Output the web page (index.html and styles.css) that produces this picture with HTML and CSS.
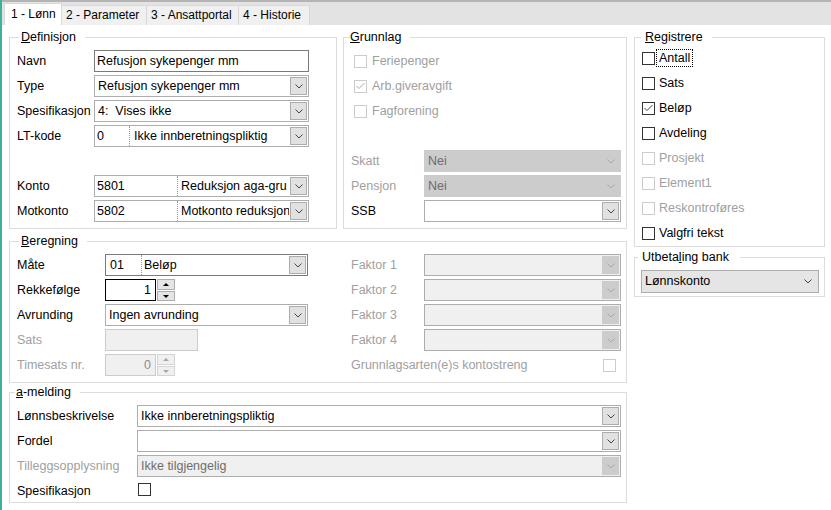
FILE: index.html
```html
<!DOCTYPE html>
<html lang="no">
<head>
    <meta charset="UTF-8">
    <title>Lønnsart</title>
    <link rel="stylesheet" href="styles.css">
</head>
<body>
<div class="window">
    <div class="tabbar">
        <div class="tab active t1">1 - Lønn</div>
        <div class="tab t2">2 - Parameter</div>
        <div class="tab t3">3 - Ansattportal</div>
        <div class="tab t4">4 - Historie</div>
    </div>

    <div class="page">
        <div class="left">
            <div class="top-row">
                <fieldset class="group def">
                    <legend><u>D</u>efinisjon</legend>
                    <div class="form def-form">
                        <label>Navn</label>
                        <div class="text dark">Refusjon sykepenger mm</div>

                        <label>Type</label>
                        <div class="combo">
                            <span class="val">Refusjon sykepenger mm</span>
                            <span class="btn"><svg width="8" height="5" viewBox="0 0 8 5"><polyline points="0.5,0.5 4,4 7.5,0.5"/></svg></span>
                        </div>

                        <label>Spesifikasjon</label>
                        <div class="combo">
                            <span class="val">4:&nbsp; Vises ikke</span>
                            <span class="btn"><svg width="8" height="5" viewBox="0 0 8 5"><polyline points="0.5,0.5 4,4 7.5,0.5"/></svg></span>
                        </div>

                        <label>LT-kode</label>
                        <div class="combo">
                            <span class="code lt">0</span>
                            <span class="val">Ikke innberetningspliktig</span>
                            <span class="btn"><svg width="8" height="5" viewBox="0 0 8 5"><polyline points="0.5,0.5 4,4 7.5,0.5"/></svg></span>
                        </div>

                        <span class="empty"></span>
                        <span class="empty"></span>

                        <label>Konto</label>
                        <div class="combo">
                            <span class="code konto">5801</span>
                            <span class="val">Reduksjon aga-gru</span>
                            <span class="btn"><svg width="8" height="5" viewBox="0 0 8 5"><polyline points="0.5,0.5 4,4 7.5,0.5"/></svg></span>
                        </div>

                        <label>Motkonto</label>
                        <div class="combo">
                            <span class="code konto">5802</span>
                            <span class="val">Motkonto reduksjon</span>
                            <span class="btn"><svg width="8" height="5" viewBox="0 0 8 5"><polyline points="0.5,0.5 4,4 7.5,0.5"/></svg></span>
                        </div>
                    </div>
                </fieldset>

                <fieldset class="group grunn">
                    <legend><u>G</u>runnlag</legend>
                    <div class="form grunn-form">
                        <div class="check off"><span class="cb"></span>Feriepenger</div>
                        <div class="check off"><span class="cb"><svg width="11" height="11" viewBox="0 0 11 11"><polyline points="1.5,5 4,7.5 9.5,2"/></svg></span>Arb.giveravgift</div>
                        <div class="check off"><span class="cb"></span>Fagforening</div>
                        <span class="empty wide"></span>

                        <label class="off">Skatt</label>
                        <div class="combo grey">
                            <span class="val">Nei</span>
                            <span class="btn"><svg width="8" height="5" viewBox="0 0 8 5"><polyline points="0.5,0.5 4,4 7.5,0.5"/></svg></span>
                        </div>

                        <label class="off">Pensjon</label>
                        <div class="combo grey">
                            <span class="val">Nei</span>
                            <span class="btn"><svg width="8" height="5" viewBox="0 0 8 5"><polyline points="0.5,0.5 4,4 7.5,0.5"/></svg></span>
                        </div>

                        <label>SSB</label>
                        <div class="combo">
                            <span class="val"></span>
                            <span class="btn"><svg width="8" height="5" viewBox="0 0 8 5"><polyline points="0.5,0.5 4,4 7.5,0.5"/></svg></span>
                        </div>
                    </div>
                </fieldset>
            </div>

            <fieldset class="group beregning">
                <legend><u>B</u>eregning</legend>
                <div class="form ber-form">
                    <label>Måte</label>
                    <div class="combo dark">
                        <span class="code mate">01</span>
                        <span class="val">Beløp</span>
                        <span class="btn"><svg width="8" height="5" viewBox="0 0 8 5"><polyline points="0.5,0.5 4,4 7.5,0.5"/></svg></span>
                    </div>
                    <span></span>
                    <label class="off">Faktor 1</label>
                    <div class="combo dis">
                        <span class="val"></span>
                        <span class="btn"><svg width="8" height="5" viewBox="0 0 8 5"><polyline points="0.5,0.5 4,4 7.5,0.5"/></svg></span>
                    </div>

                    <label>Rekkefølge</label>
                    <div class="spin">
                        <div class="text num focus">1</div>
                        <div class="arrows">
                            <span class="up"></span>
                            <span class="down"></span>
                        </div>
                    </div>
                    <span></span>
                    <label class="off">Faktor 2</label>
                    <div class="combo dis">
                        <span class="val"></span>
                        <span class="btn"><svg width="8" height="5" viewBox="0 0 8 5"><polyline points="0.5,0.5 4,4 7.5,0.5"/></svg></span>
                    </div>

                    <label>Avrunding</label>
                    <div class="combo">
                        <span class="val">Ingen avrunding</span>
                        <span class="btn"><svg width="8" height="5" viewBox="0 0 8 5"><polyline points="0.5,0.5 4,4 7.5,0.5"/></svg></span>
                    </div>
                    <span></span>
                    <label class="off">Faktor 3</label>
                    <div class="combo dis">
                        <span class="val"></span>
                        <span class="btn"><svg width="8" height="5" viewBox="0 0 8 5"><polyline points="0.5,0.5 4,4 7.5,0.5"/></svg></span>
                    </div>

                    <label class="off">Sats</label>
                    <div class="text dis sats"></div>
                    <span></span>
                    <label class="off">Faktor 4</label>
                    <div class="combo dis">
                        <span class="val"></span>
                        <span class="btn"><svg width="8" height="5" viewBox="0 0 8 5"><polyline points="0.5,0.5 4,4 7.5,0.5"/></svg></span>
                    </div>

                    <label class="off">Timesats nr.</label>
                    <div class="spin off">
                        <div class="text num dis">0</div>
                        <div class="arrows">
                            <span class="up"></span>
                            <span class="down"></span>
                        </div>
                    </div>
                    <span></span>
                    <div class="streng">
                        <span class="off">Grunnlagsarten(e)s kontostreng</span>
                        <span class="cb off-box"></span>
                    </div>
                </div>
            </fieldset>

            <fieldset class="group amelding">
                <legend><u>a</u>-melding</legend>
                <div class="form am-form">
                    <label>Lønnsbeskrivelse</label>
                    <div class="combo">
                        <span class="val">Ikke innberetningspliktig</span>
                        <span class="btn"><svg width="8" height="5" viewBox="0 0 8 5"><polyline points="0.5,0.5 4,4 7.5,0.5"/></svg></span>
                    </div>

                    <label>Fordel</label>
                    <div class="combo">
                        <span class="val"></span>
                        <span class="btn"><svg width="8" height="5" viewBox="0 0 8 5"><polyline points="0.5,0.5 4,4 7.5,0.5"/></svg></span>
                    </div>

                    <label class="off">Tilleggsopplysning</label>
                    <div class="combo dis">
                        <span class="val">Ikke tilgjengelig</span>
                        <span class="btn"><svg width="8" height="5" viewBox="0 0 8 5"><polyline points="0.5,0.5 4,4 7.5,0.5"/></svg></span>
                    </div>

                    <label>Spesifikasjon</label>
                    <div><span class="cb"></span></div>
                </div>
            </fieldset>
        </div>

        <div class="right">
            <fieldset class="group registrere">
                <legend><u>R</u>egistrere</legend>
                <div class="checklist">
                    <div class="check"><span class="cb"></span><span class="focus-rect">Antall</span></div>
                    <div class="check"><span class="cb"></span>Sats</div>
                    <div class="check"><span class="cb"><svg width="11" height="11" viewBox="0 0 11 11"><polyline points="1.5,5 4,7.5 9.5,2"/></svg></span>Beløp</div>
                    <div class="check"><span class="cb"></span>Avdeling</div>
                    <div class="check off"><span class="cb"></span>Prosjekt</div>
                    <div class="check off"><span class="cb"></span>Element1</div>
                    <div class="check off"><span class="cb"></span>Reskontroføres</div>
                    <div class="check"><span class="cb"></span>Valgfri tekst</div>
                </div>
            </fieldset>

            <fieldset class="group bank">
                <legend>Utbeta<u>l</u>ing bank</legend>
                <div class="combo drop">
                    <span class="val">Lønnskonto</span>
                    <span class="btn"><svg width="8" height="5" viewBox="0 0 8 5"><polyline points="0.5,0.5 4,4 7.5,0.5"/></svg></span>
                </div>
            </fieldset>
        </div>
    </div>
</div>
</body>
</html>
```

FILE: styles.css
```css
body {
    margin: 0;
    font-family: "Liberation Sans", Arial, sans-serif;
    font-size: 12.5px;
    color: #000;
    background: #fff;
}

.window {
    height: 510px;
    border-left: 2px solid #3fb295;
    box-sizing: border-box;
}

/* tabs */
.tabbar {
    height: 25px;
    box-sizing: border-box;
    border-top: 2px solid #b4b4b4;
    background: #e3e3e3;
    display: flex;
    align-items: flex-end;
    padding-left: 2px;
}

.tab {
    height: 20px;
    line-height: 19px;
    box-sizing: border-box;
    padding-left: 4px;
    background: #f0f0f0;
    border: 1px solid #d9d9d9;
    border-bottom: none;
    border-left: none;
    white-space: nowrap;
    overflow: hidden;
    font-size: 12px;
}

.tab.active {
    height: 22px;
    line-height: 20px;
    background: #fff;
    border-left: 1px solid #d9d9d9;
    padding-left: 6px;
}

.t1 { width: 58px; }
.t2 { width: 85px; }
.t3 { width: 92px; }
.t4 { width: 71px; }

/* page */
.page {
    display: flex;
    gap: 7px;
    padding: 5px 0 0 7px;
}

.left {
    width: 618px;
    display: flex;
    flex-direction: column;
}

.top-row {
    display: flex;
    gap: 6px;
}

.right {
    width: 191px;
    display: flex;
    flex-direction: column;
    gap: 3px;
}

.group {
    margin: 0;
    border: 1px solid #dcdcdc;
    padding: 6px 4px 6px 7px;
    min-width: 0;
    box-sizing: border-box;
}

.group legend {
    line-height: 14px;
    padding: 0 9px 0 2px;
    margin-left: 2px;
    white-space: nowrap;
}

.def { width: 328px; }
.grunn { width: 284px; }
.grunn legend { padding: 0 9px 0 0; margin-left: -1px; }

.beregning { width: 618px; margin-top: 5px; }
.amelding { width: 618px; margin-top: 2px; padding-bottom: 0; }
.amelding legend { padding: 0 9px 0 1px; margin-left: -2px; }

.registrere { padding: 3px 4px 2px 7px; }
.registrere legend { padding: 0 9px 0 4px; margin-left: -1px; }

.bank { padding: 6px 4px 3px 6px; }
.bank legend { padding: 0 11px 0 4px; margin-left: -3px; }

/* form grids */
.form {
    display: grid;
    grid-auto-rows: 22px;
    row-gap: 3px;
    align-items: center;
}

.form label {
    white-space: nowrap;
}

.def-form { grid-template-columns: 77px 215px; }
.grunn-form { grid-template-columns: 73px 197px; }
.ber-form { grid-template-columns: 88px 203px 43px 73px 197px; }
.am-form { grid-template-columns: 120px 484px; }

.wide,
.grunn-form .check { grid-column: span 2; }

.off { color: #a0a0a0; }

/* text boxes */
.text {
    height: 22px;
    line-height: 20px;
    box-sizing: border-box;
    border: 1px solid #adadad;
    padding-left: 2px;
    white-space: nowrap;
    overflow: hidden;
}

.text.dark { border-color: #7a7a7a; }
.text.focus { border-color: #000; }
.text.dis { background: #f0f0f0; border-color: #cccccc; color: #8d8d8d; }
.text.num { width: 51px; text-align: right; padding-right: 4px; }
.sats { width: 93px; }

/* combo boxes */
.combo {
    height: 22px;
    box-sizing: border-box;
    border: 1px solid #adadad;
    background: #fff;
    display: flex;
    overflow: hidden;
}

.combo .val {
    flex: 1;
    min-width: 0;
    padding-left: 3px;
    line-height: 20px;
    white-space: nowrap;
    overflow: hidden;
}

.combo .code {
    line-height: 20px;
    border-right: 1px dotted #999;
    box-sizing: border-box;
    white-space: nowrap;
}

.code.lt { width: 35px; padding-left: 2px; }
.code.lt + .val { padding-left: 4px; }
.code.konto { width: 83px; padding-left: 2px; }
.code.mate { width: 36px; padding-left: 4px; }
.code.mate + .val { padding-left: 2px; }

.combo .btn {
    width: 17px;
    margin: 1px;
    box-sizing: border-box;
    border: 1px solid #adadad;
    background: #e1e1e1;
    display: flex;
    align-items: center;
    justify-content: center;
}

.combo svg polyline {
    fill: none;
    stroke: #444;
    stroke-width: 1;
}

.combo.dark { border-color: #7a7a7a; }

.combo.grey {
    background: #cccccc;
    border-color: #cccccc;
    color: #6d6d6d;
}

.combo.grey .btn { background: none; border-color: transparent; }
.combo.grey svg polyline { stroke: #a8a8a8; }

.combo.dis { background: #f0f0f0; color: #6d6d6d; }
.combo.dis .btn { background: #cccccc; border-color: #cccccc; }
.combo.dis svg polyline { stroke: #a8a8a8; }

.combo.drop {
    height: 23px;
    width: 178px;
    background: #e5e5e5;
}

.combo.drop .val { padding-left: 3px; line-height: 21px; }
.combo.drop .btn { background: none; border-color: transparent; width: 19px; }

/* spin */
.spin {
    display: flex;
    align-items: flex-start;
}

.arrows {
    margin-left: 1px;
    width: 18px;
    display: flex;
    flex-direction: column;
    gap: 1px;
}

.arrows span {
    height: 11px;
    box-sizing: border-box;
    border: 1px solid #adadad;
    background: #e5e5e5;
    display: flex;
    align-items: center;
    justify-content: center;
}

.arrows span::after {
    content: "";
    border-left: 3px solid transparent;
    border-right: 3px solid transparent;
}

.arrows .up::after { border-bottom: 3px solid #000; }
.arrows .down { height: 10px; }
.arrows .down::after { border-top: 3px solid #000; }

.spin.off .arrows span { background: #f0f0f0; border-color: #d4d4d4; }
.spin.off .up::after { border-bottom-color: #a8a8a8; }
.spin.off .down::after { border-top-color: #a8a8a8; }

.streng {
    grid-column: span 2;
    display: flex;
    justify-content: space-between;
    align-items: center;
    padding-right: 5px;
}

/* checkboxes */
.cb {
    display: inline-flex;
    align-items: center;
    justify-content: center;
    width: 13px;
    height: 13px;
    box-sizing: border-box;
    border: 1px solid #333;
    background: #fff;
    vertical-align: middle;
}

.cb svg polyline {
    fill: none;
    stroke: #444;
    stroke-width: 1;
}

.cb.off-box { border-color: #cccccc; }

.check {
    display: flex;
    align-items: center;
    gap: 5px;
    white-space: nowrap;
}

.check.off .cb { border-color: #cccccc; }
.check.off .cb svg polyline { stroke: #a8a8a8; }

.grunn-form .check { padding-left: 3px; }

.am-form .cb { margin-left: 1px; margin-top: -4px; }

.checklist {
    display: grid;
    grid-auto-rows: 22px;
    row-gap: 3px;
    align-items: center;
}

.checklist .check { gap: 4px; }

.focus-rect {
    outline: 1px dotted #000;
    outline-offset: 1px;
    padding: 0 1px;
    margin-left: -1px;
}
```
